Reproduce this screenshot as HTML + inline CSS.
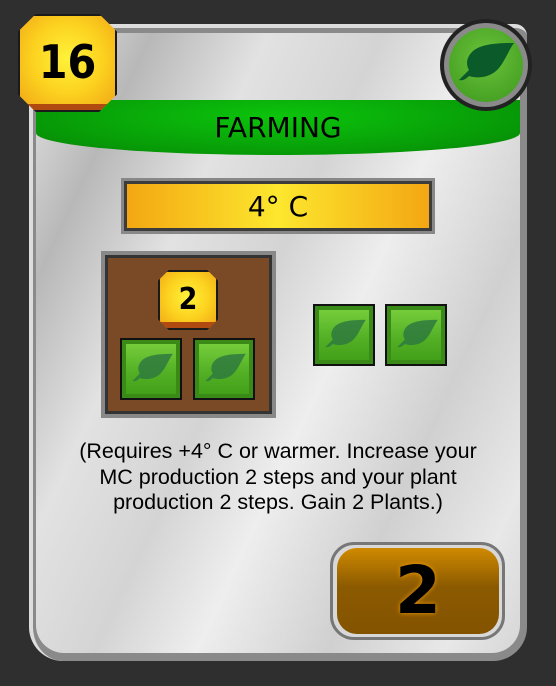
<!DOCTYPE html>
<html><head><style>
*{margin:0;padding:0;box-sizing:border-box}
body{width:556px;height:686px;background:#2f2f2f;position:relative;overflow:hidden;font-family:"Liberation Sans",sans-serif}
.card{position:absolute;left:29px;top:24px;width:498px;height:637px;border-radius:12px 12px 34px 34px;background:#8a8a8a;border-top:4px solid #ddd;border-left:4px solid #ddd;}
.inner{position:absolute;left:36px;top:33px;width:484px;height:620px;border-radius:6px 6px 28px 28px;background:linear-gradient(115deg,#e6e6e6 0%,#b8b8b8 15%,#e2e2e2 30%,#d4d4d4 45%,#eeeeee 58%,#d0d0d0 75%,#e8e8e8 90%,#d6d6d6 100%)}
.band{position:absolute;left:36px;top:100px;width:484px;height:55px;background:radial-gradient(ellipse at 50% 30%,#0cc40c,#079a07 70%,#067d06);border-radius:0 0 50% 50%/0 0 22px 22px;text-align:center;font:28px "DejaVu Sans",sans-serif;line-height:56px;color:#000}
.badge{position:absolute;background:radial-gradient(circle at 50% 45%,#fff23a,#fcd21f 50%,#f0a416);border:2px solid #1a1a1a;clip-path:polygon(18% 0,82% 0,100% 18%,100% 82%,82% 100%,18% 100%,0 82%,0 18%);font-family:"DejaVu Sans Condensed","DejaVu Sans",sans-serif;font-weight:bold;text-align:center;color:#000;box-shadow:inset 0 -6px 0 #b04a10}
.bar{position:absolute;left:121px;top:178px;width:314px;height:56px;border:3px solid #888;background:linear-gradient(90deg,#f3a612,#fde72e 50%,#f3a612);outline:3px solid #3c3c3c;outline-offset:-6px;text-align:center;font:28px "DejaVu Sans",sans-serif;line-height:52px}
.tilebox{position:absolute;left:101px;top:251px;width:175px;height:167px;border:4px solid #888;outline:3px solid #333;outline-offset:-7px;background:#7a4a26}
.plant{position:absolute;width:62px;height:62px;border:2px solid #111;background:linear-gradient(#7bd13e,#56b327 50%,#3f9d17);box-shadow:inset 0 0 0 4px #3a8a18}
.plant svg{position:absolute;left:9px;top:13px}
.txt{position:absolute;left:20px;width:516px;top:439px;text-align:center;font-size:21.5px;line-height:25.5px;color:#000}
.vp{position:absolute;left:330px;top:542px;width:175px;height:98px;border-radius:24px;border:3px solid #777;background:#d8d8d8}
.vpi{position:absolute;left:337px;top:548px;width:162px;height:86px;border-radius:20px;background:linear-gradient(#d08a00,#8b5a00 45%,#845300);text-align:center;font:bold 66px "DejaVu Sans",sans-serif;line-height:86px;text-shadow:0 0 5px #f59a00}
</style></head><body>
<div class="card"></div>
<div class="inner"></div>
<div class="band">FARMING</div>
<div class="badge" style="left:18px;top:14px;width:99px;height:98px;font-size:46px;line-height:92px">16</div>
<div style="position:absolute;left:440px;top:19px;width:92px;height:92px;border-radius:50%;background:#222;"></div>
<div style="position:absolute;left:444px;top:23px;width:84px;height:84px;border-radius:50%;background:#8a8a8a;"></div>
<div style="position:absolute;left:449px;top:28px;width:74px;height:74px;border-radius:50%;background:radial-gradient(circle at 50% 40%,#6cc23a,#4aa526 70%,#3c9020);"></div>
<svg style="position:absolute;left:457px;top:42px" width="60" height="42" viewBox="0 0 60 42"><path d="M2 38c4 1 7-1 10-4 9 3 20 1 27-5 8-7 12-20 18-28-17 0-34 1-42 9-6 6-6 13-3 18-3 3-6 6-10 10z" fill="#0a5a2a"/></svg>
<div class="bar">4° C</div>
<div class="tilebox"></div>
<div class="badge" style="left:158px;top:270px;width:60px;height:60px;font-size:30px;line-height:56px">2</div>
<div class="plant" style="left:120px;top:338px"><svg width="44" height="31" viewBox="0 0 60 42"><path d="M2 38c4 1 7-1 10-4 9 3 20 1 27-5 8-7 12-20 18-28-17 0-34 1-42 9-6 6-6 13-3 18-3 3-6 6-10 10z" fill="#2f7a3e" opacity=".85"/></svg></div>
<div class="plant" style="left:193px;top:338px"><svg width="44" height="31" viewBox="0 0 60 42"><path d="M2 38c4 1 7-1 10-4 9 3 20 1 27-5 8-7 12-20 18-28-17 0-34 1-42 9-6 6-6 13-3 18-3 3-6 6-10 10z" fill="#2f7a3e" opacity=".85"/></svg></div>
<div class="plant" style="left:313px;top:304px"><svg width="44" height="31" viewBox="0 0 60 42"><path d="M2 38c4 1 7-1 10-4 9 3 20 1 27-5 8-7 12-20 18-28-17 0-34 1-42 9-6 6-6 13-3 18-3 3-6 6-10 10z" fill="#2f7a3e" opacity=".85"/></svg></div>
<div class="plant" style="left:385px;top:304px"><svg width="44" height="31" viewBox="0 0 60 42"><path d="M2 38c4 1 7-1 10-4 9 3 20 1 27-5 8-7 12-20 18-28-17 0-34 1-42 9-6 6-6 13-3 18-3 3-6 6-10 10z" fill="#2f7a3e" opacity=".85"/></svg></div>
<div class="txt">(Requires +4° C or warmer. Increase your<br>MC production 2 steps and your plant<br>production 2 steps. Gain 2 Plants.)</div>
<div class="vp"></div>
<div class="vpi">2</div>
</body></html>
